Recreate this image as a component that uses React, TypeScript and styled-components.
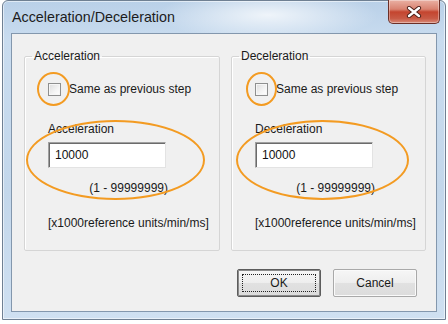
import styled, { createGlobalStyle } from "styled-components";

const GlobalStyle = createGlobalStyle`
  html, body {
    margin: 0;
    padding: 0;
    background: #ffffff;
  }
  body {
    font-family: "Liberation Sans", Arial, sans-serif;
    font-size: 12px;
    color: #1a1a1a;
  }
`;

const Window = styled.div`
  box-sizing: border-box;
  width: 444px;
  height: 320px;
  margin-left: 2px;
  border: 1px solid #6f8093;
  border-radius: 6px 6px 0 0;
  background:
    radial-gradient(ellipse 110px 26px at 265px 14px, rgba(255, 255, 255, 0.75), rgba(255, 255, 255, 0)),
    linear-gradient(180deg, #b9d0e8 0%, #c9dcef 12%, #c3d7eb 60%, #cfe0f1 100%);
  box-shadow: inset 0 0 0 1px rgba(255, 255, 255, 0.55);
  display: flex;
  flex-direction: column;
`;

const TitleBar = styled.div`
  height: 32px;
  display: flex;
  align-items: flex-start;
  padding-left: 9px;
`;

const Title = styled.div`
  font-size: 14.3px;
  line-height: 32px;
  color: #1c1c1c;
`;

const CloseButton = styled.div`
  margin-left: auto;
  margin-right: 5px;
  margin-top: -1px;
  width: 52px;
  height: 24px;
  box-sizing: border-box;
  border: 1px solid #6b2f27;
  border-top: none;
  border-radius: 0 0 5px 5px;
  background: linear-gradient(180deg, #eab1a4 0%, #d98270 40%, #c4452f 52%, #c85a45 80%, #d98a78 100%);
  box-shadow: inset 0 0 0 1px rgba(255, 255, 255, 0.35);
  display: flex;
  align-items: center;
  justify-content: center;
`;

const Client = styled.div`
  flex: 1;
  margin: 0 8px 7px 8px;
  border: 1px solid #8397ad;
  background: #f0f0f0;
  padding: 15px 10px 0 12px;
  display: flex;
  flex-direction: column;
`;

const GroupRow = styled.div`
  display: flex;
  gap: 11px;
`;

const Group = styled.fieldset<{ $width: number }>`
  width: ${(p) => p.$width}px;
  height: 202px;
  box-sizing: border-box;
  margin: 0;
  padding: 0;
  min-width: 0;
  border: 1px solid #d5d5d5;
  box-shadow: 1px 1px 0 #ffffff inset;
  border-radius: 2px;
`;

const Legend = styled.legend`
  margin-left: 7px;
  padding: 0 2px;
  line-height: 14px;
  font-size: 12px;
`;

const GroupBody = styled.div`
  position: relative;
  padding-left: 23px;
  display: flex;
  flex-direction: column;
  align-items: flex-start;
`;

const CheckRow = styled.label`
  margin-top: 19px;
  height: 14px;
  display: flex;
  align-items: center;
  gap: 8px;
  line-height: 14px;
`;

const CheckBox = styled.span`
  width: 13px;
  height: 13px;
  box-sizing: border-box;
  border: 1px solid #8e8f8f;
  background: linear-gradient(135deg, #dcdcdc 0%, #f4f4f4 60%, #ffffff 100%);
  box-shadow: inset 0 0 0 1px #f6f6f6;
`;

const FieldLabel = styled.div`
  margin-top: 26px;
  line-height: 14px;
`;

const ValueInput = styled.input`
  margin-top: 6px;
  width: 118px;
  height: 26px;
  box-sizing: border-box;
  border: 1px solid;
  border-color: #a0a0a0 #e3e3e3 #e3e3e3 #a0a0a0;
  box-shadow: inset 1px 1px 0 #6b6b6b;
  background: #ffffff;
  padding: 0 0 0 6px;
  font-family: "Liberation Sans", Arial, sans-serif;
  font-size: 12px;
  color: #111;
  outline: none;
`;

const Range = styled.div`
  margin-top: 13px;
  width: 120px;
  text-align: right;
  line-height: 14px;
`;

const Units = styled.div`
  margin-top: 21px;
  line-height: 14px;
  white-space: nowrap;
`;

const Ring = styled.div<{ $x: number; $y: number; $w: number; $h: number }>`
  position: absolute;
  left: ${(p) => p.$x}px;
  top: ${(p) => p.$y}px;
  width: ${(p) => p.$w}px;
  height: ${(p) => p.$h}px;
  box-sizing: border-box;
  border: 2px solid #f39b22;
  border-radius: 50%;
  pointer-events: none;
`;

const ButtonRow = styled.div`
  margin-top: 18px;
  padding-right: 9px;
  display: flex;
  justify-content: flex-end;
  gap: 12px;
`;

const Button = styled.button<{ $default?: boolean }>`
  position: relative;
  width: 84px;
  height: 28px;
  box-sizing: border-box;
  border: 1px solid ${(p) => (p.$default ? "#5c5c5c" : "#a9a9a9")};
  box-shadow: ${(p) => (p.$default ? "inset 0 0 0 1px #8a8a8a" : "inset 0 0 0 1px #fafafa")};
  border-radius: 2px;
  background: linear-gradient(180deg, #f6f6f6 0%, #eeeeee 48%, #e1e1e1 52%, #dcdcdc 100%);
  font-family: "Liberation Sans", Arial, sans-serif;
  font-size: 12px;
  color: #1a1a1a;
  padding: 0;

  &::after {
    content: "";
    display: ${(p) => (p.$default ? "block" : "none")};
    position: absolute;
    inset: 4px;
    border: 1px dotted #222;
  }
`;

type GroupProps = {
  title: string;
  width: number;
  smallRing: { x: number; w: number };
  bigRing: { x: number; w: number };
};

const ParamGroup = ({ title, width, smallRing, bigRing }: GroupProps) => (
  <Group $width={width}>
    <Legend>{title}</Legend>
    <GroupBody>
      <CheckRow>
        <CheckBox />
        Same as previous step
      </CheckRow>
      <FieldLabel>{title}</FieldLabel>
      <ValueInput defaultValue="10000" readOnly />
      <Range>(1 - 99999999)</Range>
      <Units>[x1000reference units/min/ms]</Units>
      <Ring $x={smallRing.x} $y={9} $w={smallRing.w} $h={34} />
      <Ring $x={bigRing.x} $y={57} $w={bigRing.w} $h={80} />
    </GroupBody>
  </Group>
);

const App = () => (
  <>
    <GlobalStyle />
    <Window>
      <TitleBar>
        <Title>Acceleration/Deceleration</Title>
        <CloseButton>
          <svg width="16" height="12" viewBox="0 0 16 12">
            <path d="M3 2 L13 10 M13 2 L3 10" stroke="#4a1d16" strokeWidth="4.2" strokeLinecap="round" />
            <path d="M3 2 L13 10 M13 2 L3 10" stroke="#ffffff" strokeWidth="2.4" strokeLinecap="round" />
          </svg>
        </CloseButton>
      </TitleBar>
      <Client>
        <GroupRow>
          <ParamGroup
            title="Acceleration"
            width={196}
            smallRing={{ x: 12, w: 33 }}
            bigRing={{ x: 1, w: 179 }}
          />
          <ParamGroup
            title="Deceleration"
            width={195}
            smallRing={{ x: 14, w: 31 }}
            bigRing={{ x: 4, w: 173 }}
          />
        </GroupRow>
        <ButtonRow>
          <Button $default>OK</Button>
          <Button>Cancel</Button>
        </ButtonRow>
      </Client>
    </Window>
  </>
);

export default App;
